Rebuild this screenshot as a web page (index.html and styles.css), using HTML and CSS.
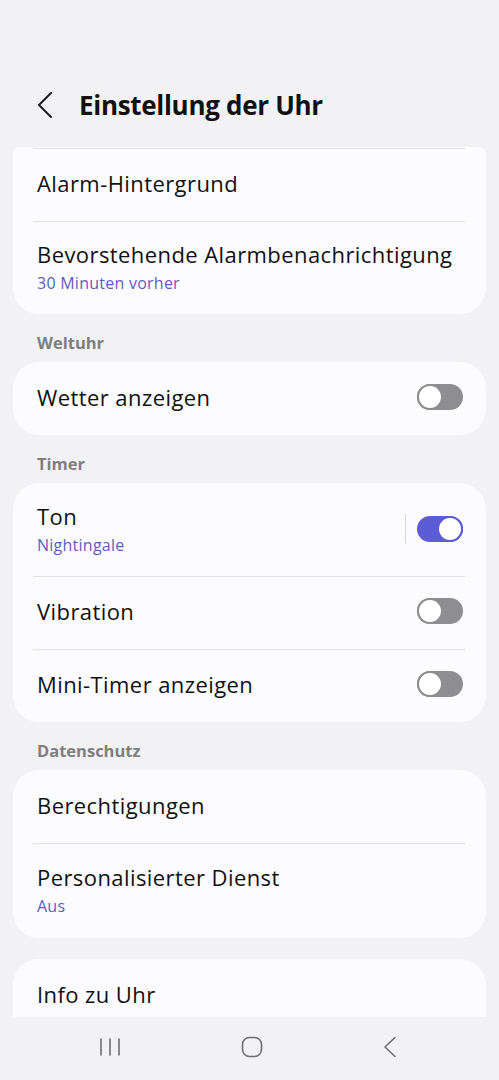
FILE: index.html
```html
<!DOCTYPE html>
<html lang="de">
<head>
<meta charset="utf-8">
<link rel="stylesheet" href="styles.css">
</head>
<body>
<div class="screen">
  <header class="appbar">
    <svg class="back" width="16" height="26" viewBox="0 0 16 26"><polyline points="14,1 2,13 14,25" fill="none" stroke="#1e1e1e" stroke-width="2" stroke-linecap="round" stroke-linejoin="round"/></svg>
    <h1 class="title">Einstellung der Uhr</h1>
  </header>

  <main class="viewport">
    <section class="card card-clipped">
      <div class="row single top-divider"><span class="label">Alarm-Hintergrund</span></div>
      <div class="row double"><div class="texts"><span class="label">Bevorstehende Alarmbenachrichtigung</span><span class="sub">30 Minuten vorher</span></div></div>
    </section>

    <h2 class="section">Weltuhr</h2>
    <section class="card">
      <div class="row single"><span class="label">Wetter anzeigen</span><span class="toggle off"></span></div>
    </section>

    <h2 class="section">Timer</h2>
    <section class="card">
      <div class="row double"><div class="texts"><span class="label">Ton</span><span class="sub">Nightingale</span></div><span class="vsep"></span><span class="toggle on"></span></div>
      <div class="row single"><span class="label">Vibration</span><span class="toggle off"></span></div>
      <div class="row single"><span class="label">Mini-Timer anzeigen</span><span class="toggle off"></span></div>
    </section>

    <h2 class="section">Datenschutz</h2>
    <section class="card">
      <div class="row single"><span class="label">Berechtigungen</span></div>
      <div class="row double tall"><div class="texts"><span class="label">Personalisierter Dienst</span><span class="sub">Aus</span></div></div>
    </section>

    <section class="card card-last">
      <div class="row single"><span class="label">Info zu Uhr</span></div>
    </section>
  </main>

  <nav class="navbar">
    <svg width="22" height="20" viewBox="0 0 22 20"><g stroke="#6f6f6f" stroke-width="1.6" stroke-linecap="round"><line x1="2" y1="2" x2="2" y2="18"/><line x1="11" y1="2" x2="11" y2="18"/><line x1="20" y1="2" x2="20" y2="18"/></g></svg>
    <svg width="22" height="22" viewBox="0 0 22 22"><rect x="1.5" y="1.5" width="19" height="19" rx="7" fill="none" stroke="#6f6f6f" stroke-width="1.6"/></svg>
    <svg width="16" height="22" viewBox="0 0 16 22"><polyline points="13,1.5 3,11 13,20.5" fill="none" stroke="#6f6f6f" stroke-width="1.6" stroke-linecap="round" stroke-linejoin="round"/></svg>
  </nav>
</div>
</body>
</html>
```

FILE: styles.css
```css
* { box-sizing: border-box; margin: 0; padding: 0; }
html, body { background: #f2f2f4; }
body { font-family: "Open Sans", Roboto, "Liberation Sans", sans-serif; color: #111; }
.screen { width: 499px; height: 1080px; display: flex; flex-direction: column; overflow: hidden; }

.appbar { height: 147px; display: flex; align-items: center; padding: 62px 0 0 37px; gap: 26px; }
.back { flex: none; }
.title { font-size: 26px; font-weight: 700; color: #111; letter-spacing: -0.3px; }

.viewport { height: 870px; overflow: hidden; padding: 0 13px; display: flex; flex-direction: column; }

.card { background: #fcfcfe; border-radius: 26px; flex: none; }
.card-clipped { border-radius: 6px 6px 26px 26px; }
.card-last { margin-top: 21px; border-radius: 26px 26px 6px 6px; }

.row { display: flex; align-items: center; padding: 0 23px 0 24px; position: relative; }
.row + .row::before, .row.top-divider::before { content: ""; position: absolute; left: 20px; right: 21px; top: 0; height: 1px; background: #e2e2e6; }
.row.top-divider::before { top: 1px; }
.single { height: 73px; padding-bottom: 3px; }
.single.top-divider { height: 74px; }
.double { height: 93px; padding-bottom: 2px; }
.double.tall { height: 95px; }

.texts { display: flex; flex-direction: column; flex: 1; }
.label { font-size: 22px; color: #111; flex: 1; line-height: 28px; letter-spacing: 0.42px; }
.sub { font-size: 16px; color: #5c5cbf; line-height: 22px; margin-top: 4px; letter-spacing: 0.25px; }

.section { font-size: 16.5px; font-weight: 700; color: #7e7e80; height: 48px; line-height: 58px; padding-left: 24px; }

.toggle { flex: none; width: 46px; height: 26px; border-radius: 13px; position: relative; }
.toggle::after { content: ""; position: absolute; top: 0; width: 26px; height: 26px; border-radius: 50%; background: #fff; box-sizing: border-box; }
.toggle.off { background: #8e8e92; }
.toggle.off::after { left: 0; border: 2px solid #8e8e92; }
.toggle.on { background: #5c5cd6; }
.toggle.on::after { right: 0; border: 2px solid #5c5cd6; }

.vsep { flex: none; width: 1px; height: 29px; background: #d6d6da; margin-right: 11px; }

.navbar { flex: 1; display: flex; align-items: center; justify-content: space-between; padding: 0 101px 4px 99px; }
```
